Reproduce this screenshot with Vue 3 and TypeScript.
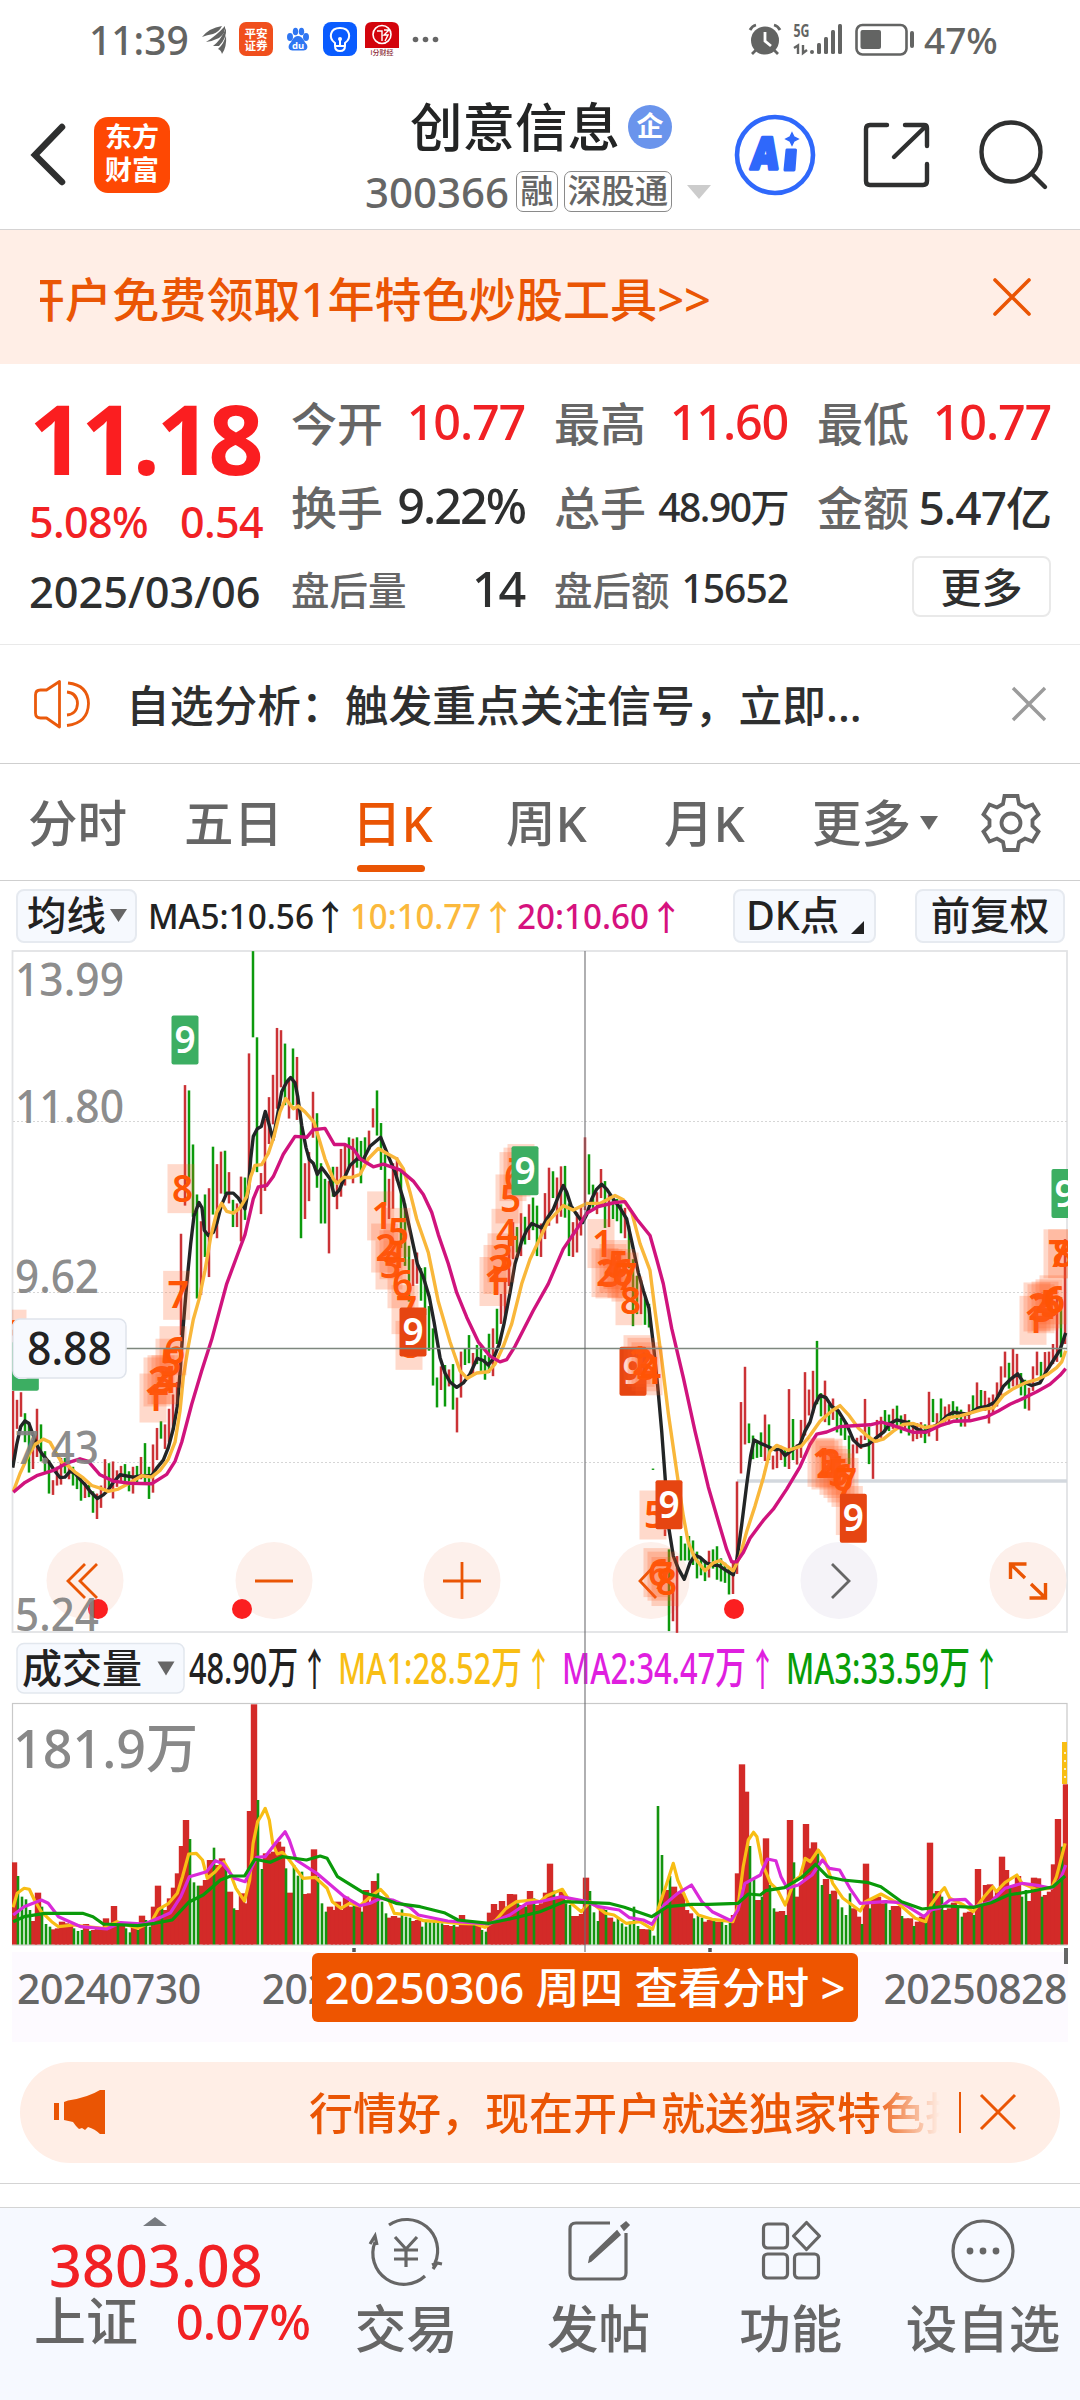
<script setup lang="ts">
interface Candle { x: number; y1: number; y2: number; up: boolean }
interface Bar { x: number; y: number; h: number; w: number; up: boolean }
interface Badge { x: number; y: number; n: number; kind: string }

const STEP = 4
const X0 = 13

// One entry per trading day: direction, high offset, low offset (chart units of 1/2.24 px).
const days = `
r1010-1180 r1030-1095 r1013-1068 g1060-1125 g1085-1193 r1120-1185 r1050-1158 g1085-1168 g1145-1195 g1165-1240 r1210-1243 r1180-1222
r1160-1220 g1160-1195 r1175-1208 g1180-1222 g1195-1230 g1205-1256 r1215-1250 g1220-1248 g1235-1283 r1240-1297 r1222-1272 r1163-1230
g1172-1235 r1168-1251 r1188-1225 r1178-1215 g1174-1222 g1190-1235 r1180-1240 g1178-1215 r1158-1208 g1127-1215 g1180-1252 r1130-1238
r1093-1165 g1078-1117 r1085-1140 r1050-1125 r1018-1098 r990-1050 r658-885 r325-595 g337-540 g458-620 g570-803 r630-795
g570-710 r556-755 g463-615 r502-668 r474-568 g472-570 r520-590 g582-643 r590-643 r530-675 g532-627 r254-560
g25-218 g218-520 r522-614 r400-562 r352-457 r302-413 r197-378 r202-330 g232-370 r310-400 g243-370 r262-403
g400-668 r500-625 r475-585 r340-443 g388-555 g500-635 g535-635 r540-702 g508-575 r508-603 r468-575 r460-550
g442-510 r445-545 g442-510 g450-545 g442-495 r427-470 r377-420 g337-438 g410-515 g480-595 r535-625 r500-602
r487-540 g515-690 g590-730 g685-810 r715-775 r700-770 g735-808 g733-840 g820-920 g870-998 g980-1047 r955-1008
g952-1045 r962-1000 g950-1052 r1025-1103 r922-1025 g915-952 g885-948 r925-975 g907-950 g910-965 g930-985 g882-970
r870-977 g826-905 r793-860 r758-850 r660-775 r632-715 g643-700 r612-708 g620-682 r592-672 g577-650 g595-708
r635-710 r567-670 r510-640 g518-578 r532-635 r507-620 g506-622 g590-708 r632-710 r610-700 r597-662 r442-605
g480-570 g548-600 r565-614 r513-578 g540-645 r570-643 g580-625 g580-630 g592-657 r600-668 g640-735 g715-865
g752-838 r762-838 g800-862 g815-868 g1184-1187 g0-0 g0-0 r1320-1335 g1365-1548 r1440-1526 r1380-1552 g1335-1390
g1352-1390 g1335-1390 g1345-1400 g1370-1430 g1385-1423 g1390-1436 r1368-1428 g1365-1408 g1358-1433
g1385-1437 g1395-1440 g1405-1466 r1395-1465 r1213-1420 r1035-1195 r956-1130 g1083-1127 g1110-1163 g1125-1160 g1103-1158 r1063-1167
g1085-1165 r1155-1186 r1140-1183 r1133-1165 g1140-1180 r1006-1185 g1073-1165 r1130-1175 r1075-1160 r968-1110 r1007-1065 r965-1060
g898-1040 g1015-1067 r987-1080 g1040-1087 r1027-1075 g1045-1103 g1070-1110 g1080-1120 g1110-1175 r1130-1190 r1115-1150 r1110-1140
r1028-1120 g1090-1174 r1120-1207 r1075-1125 r1068-1115 g1053-1103 g1063-1100 r1050-1095 g1043-1093 g1065-1105 r1062-1100 g1075-1110
r1080-1123 r1082-1118 r1080-1115 g1085-1127 r1012-1112 g1028-1080 r1060-1122 g1027-1080 r1045-1080 r1040-1085 g1033-1067 g1045-1080
g1052-1090 r1062-1090 r1040-1075 g1020-1060 r991-1050 g1008-1055 r1010-1055 r1025-1083 r1018-1060 r991-1045 r955-1020 r922-980
g947-1005 r915-1000 r927-1000 g970-1020 g985-1050 r1003-1054 r955-1010 r922-975 g945-990 r923-970 r922-960 r905-950
r800-945 g800-935 r670-905`.trim().split(/\s+/)

const py = (v: number) => 940 + v / 2.24
const candles: Candle[] = days.map((d, i) => {
  const [a, b] = d.slice(1).split('-').map(Number)
  return { x: X0 + i * STEP, y1: py(a), y2: py(b), up: d[0] === 'r' }
}).filter(c => c.y2 > 941)

// Daily turnover tops, measured down from the top of the volume pane.
const volumes = `
r727 g768 g830 g838 g870 r903 r818 g860 g912 g920 r928 r925 r905 r910 r915 g925 g933 g930 r912 g933 r930 r925 r928 r895 r915 r858
g915 r910 g925 g937 r920 g930 r887 g900 g920 r860 r797 g858 r870 r835 r803 r760 r678 r600 g657 g787 g797 r797 r780 r720 g683 r735
r715 g745 r815 g865 r870 r820 r850 r573 r253 g540 g747 r700 r700 r695 r665 r680 g745 r818 g735 g767 g755 r822 r820 r688 g770 g850
g875 r860 r870 r845 r870 r830 r860 g845 r855 g875 r810 r850 r783 g760 g845 g880 r893 r888 r893 g868 g890 g893 r903 r900 g920 g905
g907 g905 g908 g910 r915 r918 g915 r920 r885 r905 r912 g915 r912 g930 g935 r878 r852 r870 r843 r860 r822 r823 g850 r855 g860 r813
g835 r855 r850 r818 r731 g812 r830 r815 g850 g855 r888 r888 r882 r773 g813 g877 g903 r868 g870 r893 g905 g893 g910 g920 g905 g860
g918 r927 r928 g928 g947 g558 g705 r810 g768 r800 r818 r820 r870 r880 g895 g887 g893 r905 r900 g895 r905 g905 g915 g908 r885 r760
r433 r515 g678 g778 r840 g830 r655 g795 g865 r875 r873 g885 r600 g727 r830 r790 r612 r685 r667 g700 g795 r777 g822 r812 g838 g862
g885 g820 r865 r890 g912 r731 g865 r835 r830 r850 g840 g870 r858 r858 g888 r895 r895 g918 r905 r890 g908 r668 g820 r813 g830 r870
r865 r848 g860 g890 r878 r875 g885 r747 g850 r795 r793 r830 r815 r710 r750 g800 r800 r768 g830 g810 r843 r773 r775 g830 r825 r815
r733 r597 g680 r493`.trim().split(/\s+/)

const bars: Bar[] = volumes.map((v, i) => {
  const up = v[0] === 'r'
  const y = 1620 + Number(v.slice(1)) / 3
  const w = up ? 6.4 : 2.6
  return { x: X0 + 1 + i * STEP - w / 2, y, h: 1944.5 - y, w, up }
})
const upBars = bars.filter(b => b.up)
const downBars = bars.filter(b => !b.up)

const line = (sections: string[], ox: number, sx: number, oy: number, sy: number) =>
  sections.map((s, k) => s.split(' ').map(p => {
    const [x, y] = p.split(',').map(Number)
    return `${(k * ox + x / sx).toFixed(1)},${(oy + y / sy).toFixed(1)}`
  }).join(' ')).join(' ')

const ma = (...s: string[]) => line(s, 360, 3, 940, 2.24)
const vma = (...s: string[]) => line(s, 540, 2.904, 1620, 3)

const ma5 = ma(
  '38,1182 50,1130 62,1090 75,1077 87,1083 100,1110 112,1133 125,1150 147,1170 165,1190 180,1204 195,1203 210,1190 225,1195 240,1208 255,1220 270,1235 292,1251 310,1243 325,1232 340,1215 360,1198 400,1203 425,1200 455,1200 470,1183 490,1165 505,1137 520,1095 532,1045 540,970 548,880 560,770 572,680 582,618 597,588 606,600 613,650 625,662 640,655 650,635 664,595 680,567 700,567 715,578 735,602 745,560 752,490 760,440 772,423 784,418 796,384 808,415 819,447 832,395 845,340 860,318 872,308 885,320 893,350 905,415 918,465 928,492 940,500 952,525 965,510 975,520 990,535 1003,572 1018,560 1035,530 1050,505 1072,490',
  '10,492 30,462 62,442 80,475 105,520 130,580 150,650 172,725 190,755 208,800 222,855 240,935 255,970 270,990 290,1002 310,992 330,972 352,937 370,942 385,952 400,938 418,905 432,860 450,790 465,725 485,675 500,650 515,635 530,640 545,645 560,625 580,603 595,575 610,550 620,565 633,595 650,615 668,633 680,615 695,580 710,558 725,547 740,558 760,580 780,600 800,625 815,675 835,745 850,785 867,825 880,905 893,1000 905,1100 915,1200 925,1310 940,1380 955,1408 973,1432 990,1395 1005,1378 1020,1383 1040,1396 1060,1400 1080,1402',
  '0,1403 20,1413 40,1422 50,1390 65,1310 80,1220 92,1155 102,1120 120,1127 145,1135 165,1142 180,1140 195,1155 215,1143 240,1130 255,1100 270,1080 285,1040 300,1020 318,1025 335,1045 355,1055 380,1085 400,1120 420,1134 445,1130 465,1117 490,1103 510,1083 530,1075 565,1081 590,1095 615,1103 640,1090 655,1085 680,1067 700,1058 720,1060 745,1062 775,1048 800,1045 825,1035 850,1000 870,985 893,972 910,990 935,998 960,992 980,965 1000,942 1020,918 1037,880')
const ma10 = ma(
  '40,1235 60,1195 85,1155 105,1130 130,1118 150,1125 165,1145 185,1170 205,1178 225,1192 250,1205 275,1222 300,1228 325,1235 355,1230 385,1218 425,1200 455,1203 480,1188 505,1163 525,1125 540,1055 550,980 565,910 580,850 597,805 615,740 632,665 650,610 665,590 680,608 700,612 720,600 740,575 752,530 765,505 785,503 805,478 822,440 840,385 857,355 880,378 895,372 915,385 942,408 955,440 975,490 1000,535 1012,545 1030,532 1055,532',
  '0,525 25,490 55,467 85,480 110,490 130,512 150,565 170,625 205,700 235,810 270,900 300,965 322,982 350,970 385,967 405,950 430,910 455,860 485,770 510,715 545,660 565,630 610,595 640,605 680,590 720,590 765,572 790,582 815,610 840,680 870,740 885,830 905,940 925,1060 950,1190 970,1290 985,1350 1005,1385 1035,1413 1060,1395',
  '0,1390 20,1402 40,1413 60,1380 80,1325 105,1268 130,1205 150,1145 170,1132 205,1143 245,1133 270,1110 300,1078 335,1055 360,1043 385,1063 415,1093 440,1110 465,1123 490,1118 520,1100 550,1085 580,1083 615,1092 650,1088 685,1070 720,1066 750,1060 785,1052 820,1048 850,1020 880,1005 915,992 950,985 985,972 1010,958 1025,945 1037,920')
const ma20 = ma(
  '40,1237 75,1215 110,1200 160,1188 200,1172 240,1162 265,1168 300,1198 340,1212 390,1217 455,1218 500,1197 525,1168 545,1125 575,1040 605,965 635,895 680,770 715,700 735,660 760,580 775,553 800,550 820,530 850,480 885,440 920,442 940,425 975,422 1003,458 1035,458 1060,468',
  '0,490 40,508 70,502 120,515 160,540 190,570 215,610 235,660 265,725 290,790 320,845 355,900 390,932 420,945 440,940 465,910 520,830 565,770 610,692 650,648 680,612 715,597 765,588 795,586 830,625 870,662 890,715 910,770 935,870 970,980 1005,1100 1045,1225',
  '0,1315 20,1365 35,1393 50,1393 70,1372 90,1340 130,1300 160,1275 200,1230 240,1180 270,1130 290,1107 320,1102 360,1090 400,1088 450,1086 485,1080 530,1090 580,1103 620,1102 660,1088 700,1078 750,1077 800,1068 835,1055 870,1040 915,1025 950,1012 990,995 1020,975 1037,960')

const vol1 = vma(
  '38,862 50,820 70,805 85,808 100,840 120,875 150,905 170,920 215,915 250,920 300,925 340,905 400,925 440,905 460,868 490,850 515,820 530,770 548,702 570,700 588,720 602,775 625,755 650,725 665,750 685,805 710,843 725,780 735,670 748,605 760,585 770,565 782,600 792,670 805,702 820,697 840,720 880,775 915,772 950,805 965,845 990,865 1015,850 1045,858 1075,830 1105,808 1125,830 1145,880 1190,885 1230,902 1280,905 1330,910 1380,912 1408,922 1440,900 1470,865 1500,845 1550,840',
  '0,845 20,827 65,808 90,850 120,875 145,845 190,880 215,885 250,910 290,905 327,928 345,860 365,800 387,730 400,780 430,850 460,885 500,898 560,905 575,860 590,740 605,660 620,637 630,650 645,730 670,790 690,810 712,855 740,780 755,770 770,715 785,725 808,690 825,715 850,790 880,835 930,873 945,845 990,822 1040,850 1090,895 1120,905 1135,855 1160,820 1175,803 1190,835 1230,855 1258,875 1290,830 1315,800 1325,815 1350,788 1385,765 1400,790 1440,808 1485,805 1500,770 1525,670')
const vol2 = vma(
  '38,885 70,860 120,840 140,850 170,890 235,920 310,927 350,908 420,912 470,890 495,878 525,830 550,770 600,755 625,722 645,730 680,775 712,785 745,712 770,710 800,670 828,635 840,660 860,720 920,760 960,795 1000,830 1045,857 1075,850 1105,835 1140,840 1190,862 1215,885 1300,903 1420,912 1480,885 1530,850',
  '0,845 60,830 130,843 170,860 230,870 260,893 300,900 325,913 360,855 400,820 440,795 470,845 500,875 555,902 575,870 595,790 640,765 660,717 685,722 700,770 718,805 750,795 790,765 820,720 840,745 870,750 900,805 930,850 1000,845 1050,848 1115,890 1135,870 1160,865 1190,840 1235,838 1258,862 1310,845 1350,805 1400,790 1450,797 1485,805 1510,780 1527,735')
const vol3 = vma(
  '38,905 70,890 130,880 240,880 270,890 300,912 400,917 450,910 500,900 550,845 590,825 640,780 670,768 710,768 740,718 785,727 820,710 890,720 930,708 950,715 980,770 1055,818 1100,830 1150,850 1220,860 1290,878 1330,900 1420,910 1490,895',
  '0,875 70,845 200,850 245,862 325,890 370,860 440,853 490,853 575,850 605,822 640,825 655,812 710,803 760,772 800,733 835,770 880,780 950,787 990,800 1050,845 1110,867 1180,858 1260,862 1310,848 1360,825 1420,815 1490,800 1525,768')

const marks: [number, number, number, string?][] = [
  [39, 883, 8], [76, 955, 9, 'top'],
  [459, 1026, 1], [471, 990, 2], [483, 985, 3], [495, 985, 4], [507, 948, 5], [519, 920, 6], [530, 796, 7], [543, 557, 8], [555, 224, 9, 'top'],
  [1142, 618, 1], [1154, 690, 2], [1167, 728, 3], [1179, 705, 4], [1191, 655, 5], [1203, 770, 6], [1215, 828, 7], [1227, 908, 8], [1239, 878, 9, 'low'],
  [1479, 765, 1], [1491, 738, 2], [1503, 712, 3], [1515, 657, 4], [1527, 580, 5], [1539, 530, 6], [1551, 520, 7], [1563, 512, 8], [1575, 517, 9, 'top'],
  [1803, 680, 1], [1815, 745, 2], [1827, 748, 3], [1839, 736, 4], [1851, 727, 5], [1863, 747, 6], [1875, 755, 7], [1887, 808, 8], [1899, 966, 9, 'low'],
  [1911, 940, 1], [1923, 946, 2], [1935, 956, 3], [1947, 965, 4], [1959, 1288, 5], [1971, 1417, 6], [1983, 1425, 7], [1995, 1437, 8], [2007, 1265, 9, 'low'],
  [2463, 1170, 1], [2475, 1176, 2], [2487, 1172, 3], [2499, 1188, 4], [2511, 1195, 5], [2523, 1205, 6], [2535, 1215, 7], [2548, 1278, 8], [2560, 1295, 9, 'low'],
  [3099, 852, 1], [3111, 822, 2], [3123, 826, 3], [3135, 820, 4], [3147, 815, 5], [3159, 806, 6], [3171, 703, 7], [3185, 703, 8], [3195, 568, 9, 'top'],
]
const badges: Badge[] = marks.map(([x, y, n, kind]) => ({ x: x / 3, y: py(y), n, kind: kind ?? 'count' }))

const priceLabels = [
  { t: '13.99', y: 996, w: 109 }, { t: '11.80', y: 1123, w: 109 }, { t: '9.62', y: 1293, w: 84 },
  { t: '7.43', y: 1464, w: 84 }, { t: '5.24', y: 1631, w: 84 },
]
const tabs = [
  { t: '分时', w: 156 }, { t: '五日', w: 168 }, { t: '日K', w: 154, on: true }, { t: '周K', w: 158 }, { t: '月K', w: 148 },
]
const quotes = [
  { k: '今开', v: '10.77', c: 'up' }, { k: '最高', v: '11.60', c: 'up' }, { k: '最低', v: '10.77', c: 'up' },
  { k: '换手', v: '9.22%', c: 'rate' }, { k: '总手', v: '48.90万', c: 'sm' }, { k: '金额', v: '5.47亿', c: 'md' },
  { k: '盘后量', v: '14', c: 'low' }, { k: '盘后额', v: '15652', c: 'low sm' },
]
</script>

<template>
  <div class="phone">
    <header class="status">
      <span class="clock">11:39</span>
      <svg class="sicons" width="260" height="44" viewBox="195 18 260 44">
        <g fill="#636463"><path d="M202 37q7-9 20-11-3 6-9 8-6 1-11 3z" /><path d="M206 42q10-6 19-16 1 7-6 12-6 3-13 4z" /><path d="M213 46q8-6 13-18 1 10-7 18z" /><path d="M218 49q6-5 8-14 1 12-4 19-1-4-4-5z" /></g>
        <rect x="239" y="22" width="34" height="34" rx="7" fill="#f04f1d" />
        <text x="256" y="38" class="mini" font-size="11.5">平安</text><text x="256" y="49.500" class="mini" font-size="11.5">证券</text>
        <g fill="#2f76f2"><ellipse cx="290" cy="37" rx="3" ry="4" /><ellipse cx="295.500" cy="31.500" rx="2.700" ry="3.800" /><ellipse cx="301.500" cy="31.500" rx="2.700" ry="3.800" /><ellipse cx="306" cy="37" rx="3" ry="4" /><path d="M298 36c5 0 6 6 8.500 8 2 3 .5 6.500-3 6.500h-11c-3.500 0-5-3.500-3-6.500 2.500-2 3.500-8 8.500-8z" /></g>
        <text x="298" y="48.500" class="mini" font-size="9.500">du</text>
        <rect x="323" y="22" width="34" height="34" rx="8" fill="#0a5cff" />
        <g fill="none" stroke="#fff" stroke-width="2"><path d="M335 46v-3c-7-5-5-15 5-15s12 10 5 15v3q0 5-5 5t-5-5zM335 46h10M340 40v5" /></g><circle cx="340" cy="39" r="2" fill="#fff" />
        <path d="M365 48V29q0-7 7-7h20q7 0 7 7v19z" fill="#d3040c" /><circle cx="382" cy="34.500" r="9" fill="none" stroke="#fff" stroke-width="1.600" /><path d="M377 31h5v10M384 30h5l-5 5h4l-3 6" fill="none" stroke="#fff" stroke-width="1.400" />
        <text x="382" y="55" font-size="7" text-anchor="middle" fill="#8c2a35">i分财经</text>
        <g fill="#666"><circle cx="415.500" cy="39.500" r="2.800" /><circle cx="425.500" cy="39.500" r="2.800" /><circle cx="435.500" cy="39.500" r="2.800" /></g>
      </svg>
      <svg class="sright" width="170" height="44" viewBox="748 18 170 44">
        <circle cx="765" cy="40.500" r="14" fill="#636463" /><path d="M765 32v9l6 5" fill="none" stroke="#fff" stroke-width="2.800" />
        <path d="M750 30q2-4 6-5M780 30q-2-4-6-5M756 50l-4 4M774 50l4 4" stroke="#636463" stroke-width="2.800" fill="none" />
        <text x="793.500" y="37" font-size="17.500" textLength="16" lengthAdjust="spacingAndGlyphs" font-weight="700" fill="#636463">5G</text>
        <path d="M794 48l4-2.500V54M803 45v8l4-3" fill="none" stroke="#636463" stroke-width="2.400" />
        <g fill="#636463"><circle cx="812" cy="52" r="2" /><rect x="817" y="43" width="4" height="11" rx="1.500" /><rect x="824" y="37" width="4" height="17" rx="1.500" /><rect x="831" y="30" width="4" height="24" rx="1.500" /><rect x="838" y="24" width="4" height="30" rx="1.500" /></g>
        <rect x="856.500" y="25" width="50" height="29.500" rx="6" fill="none" stroke="#636463" stroke-width="2.600" /><rect x="860.500" y="30" width="20.500" height="19" rx="2" fill="#636463" /><rect x="910" y="31" width="4" height="17" rx="2" fill="#636463" />
      </svg>
      <span class="pct">47%</span>
    </header>

    <nav class="nav">
      <svg class="back" width="44" height="70" viewBox="0 0 44 70"><path d="M36 7L9 35l27 27" fill="none" stroke="#2e2f2f" stroke-width="6.500" stroke-linecap="round" /></svg>
      <div class="logo"><span>东方</span><span>财富</span></div>
      <div class="title">
        <div class="name"><b>创意信息</b><i>企</i></div>
        <div class="code"><span>300366</span><em>融</em><em>深股通</em><svg width="26" height="16" viewBox="0 0 26 16"><path d="M1 1h24L13 15z" fill="#ccc" /></svg></div>
      </div>
      <svg class="tools" width="290" height="90" viewBox="730 109 290 90">
        <g transform="translate(-30 0)">
          <circle cx="805" cy="154" r="38" fill="none" stroke="#2f68fb" stroke-width="4.600" />
          <text x="781" y="168" font-size="44" font-weight="900" fill="#2f68fb" stroke="#2f68fb" stroke-width="3.500" stroke-linejoin="round" textLength="27" lengthAdjust="spacingAndGlyphs" transform="skewX(-6) translate(17 0)">A</text>
          <path d="M817 149h8.500l-1.500 20h-9z" fill="#2f68fb" stroke="#2f68fb" stroke-width="3" stroke-linejoin="round" /><path d="M822 132l2 4 4 2-4 2-2 4-2-4-4-2 4-2z" fill="#2f68fb" stroke="#2f68fb" stroke-width="1.500" />
        </g>
        <g fill="none" stroke="#2f3030" stroke-width="4.400" stroke-linecap="round"><path d="M887 124h-17q-4 0-4 4v52q0 4 4 4h53q4 0 4-4v-17M905 124h19q3 0 3 3v18M926 125l-32 31" /></g>
      </svg>
      <svg class="search" width="60" height="76" viewBox="975 116 74 76"><g fill="none" stroke="#2f3030" stroke-width="4.400" stroke-linecap="round"><circle cx="1011" cy="151" r="29.500" /><path d="M1032 173l13 13" /></g></svg>
    </nav>

    <section class="banner">
      <div class="clip"><span>开户免费领取1年特色炒股工具&gt;&gt;</span></div>
      <svg width="40" height="40" viewBox="0 0 40 40"><path d="M3 3l34 34M37 3L3 37" stroke="#ea5504" stroke-width="3.600" stroke-linecap="round" /></svg>
    </section>

    <section class="quote">
      <div class="main">
        <div class="price">11.18</div>
        <div class="chg"><span>5.08%</span><span>0.54</span></div>
        <div class="date">2025/03/06</div>
      </div>
      <div class="grid">
        <div v-for="q in quotes" :key="q.k" class="cell" :class="q.c"><span class="k">{{ q.k }}</span><span class="v">{{ q.v }}</span></div>
        <div class="cell more"><button>更多</button></div>
      </div>
    </section>

    <section class="notice">
      <svg width="60" height="52" viewBox="32 678 60 52" fill="none" stroke="#ea5a0c" stroke-width="2.800" stroke-linejoin="round"><path d="M35.500 695q0-5 5-5h6l13-8.500v45.500l-13-9h-6q-5 0-5-5z" /><path d="M67 692q10 1 10.500 11.500Q77 714 67 715M68 683q20 2 20.500 20.500Q88 723 67 725.500" /></svg>
      <span>自选分析：触发重点关注信号，立即...</span>
      <svg class="x" width="36" height="36" viewBox="0 0 36 36"><path d="M2 2l32 32M34 2L2 34" stroke="#9b9b9b" stroke-width="3.400" /></svg>
    </section>

    <section class="tabs">
      <div v-for="t in tabs" :key="t.t" class="tab" :class="{ on: t.on }" :style="{ width: t.w + 'px' }">{{ t.t }}</div>
      <div class="tab last">更多<svg width="18" height="14" viewBox="0 0 18 14"><path d="M0 0h18L9 14z" fill="#666" /></svg></div>
      <svg class="gear" width="60" height="62" viewBox="-30 -31 60 62" fill="none" stroke="#666" stroke-width="3.800"><circle r="9.500" /><path d="M-6.500-27h13l1.500 8 6 3.500 7.500-3 6 10-6 5.500v6l6 5.500-6 10-7.500-3-6 3.500-1.500 8h-13l-1.500-8-6-3.500-7.500 3-6-10 6-5.500v-6l-6-5.500 6-10 7.500 3 6-3.500z" /></svg>
    </section>

    <section class="kbar">
      <div class="chip c1">均线<svg width="17" height="13" viewBox="0 0 17 13"><path d="M0 0h17L8.500 13z" fill="#666" /></svg></div>
      <svg class="legend" width="570" height="60" viewBox="140 886 570 60">
        <g font-size="34.500" font-weight="500">
          <g fill="#222"><text x="148" y="929" textLength="166" lengthAdjust="spacingAndGlyphs">MA5:10.56</text><text x="313" y="930" class="arr">↑</text></g>
          <g fill="#fbb93c"><text x="350" y="929" textLength="131" lengthAdjust="spacingAndGlyphs">10:10.77</text><text x="481" y="930" class="arr">↑</text></g>
          <g fill="#d6127e"><text x="517" y="929" textLength="132" lengthAdjust="spacingAndGlyphs">20:10.60</text><text x="649" y="930" class="arr">↑</text></g>
        </g>
      </svg>
      <div class="chip c2">DK点<svg width="13" height="13" viewBox="0 0 13 13"><path d="M13 0v13H0z" fill="#222" /></svg></div>
      <div class="chip c3">前复权</div>
    </section>

    <section class="chart">
      <svg class="plot" width="1080" height="1008" viewBox="0 944 1080 1008">
        <defs>
          <clipPath id="kpane"><rect x="12" y="951" width="1056" height="682" /></clipPath>
          <clipPath id="vpane"><rect x="12" y="1703" width="1056" height="242" /></clipPath>
        </defs>
        <rect x="12.500" y="951" width="1054.500" height="681" fill="none" stroke="#e2e3e5" stroke-width="1.800" />
        <g stroke="#d6d6d6" stroke-width="1" stroke-dasharray="2 2"><path d="M13 1121.500H1067M13 1292.500H1067M13 1462.500H1067" /></g>

        <g fill="#fdf0eb"><circle v-for="x in [85, 274, 462, 651, 1028]" :key="x" :cx="x" cy="1580.500" r="38.500" /></g>
        <circle cx="839" cy="1580.500" r="38.500" fill="#f5f3f8" />
        <path d="M737 1481H1067" stroke="#d3d8de" stroke-width="3.500" />
        <g fill="none" stroke="#ea5504" stroke-width="2.800"><path d="M85 1564l-17 17 17 17M97 1564l-17 17 17 17M255 1581h38M443 1581h38M462 1562v37M656 1564l-16 17 16 17" /><path d="M1010.500 1579v-15h16M1011 1564.500l14 13.500M1045.500 1583v15h-16M1045 1597.500l-14-13.500" stroke-width="3.400" /></g>
        <path d="M832 1564l17 17-17 17" fill="none" stroke="#666" stroke-width="2.800" />
        <g fill="#fb1f20"><circle cx="98" cy="1609" r="10" /><circle cx="242" cy="1609" r="10" /><circle cx="734" cy="1609" r="10" /></g>

        <g clip-path="url(#kpane)">
          <line v-for="(c, i) in candles" :key="i" :x1="c.x" :x2="c.x" :y1="c.y1" :y2="c.y2" :stroke="c.up ? '#cb3236' : '#0c9a0c'" stroke-width="2.500" />
          <g fill="none" stroke-width="3.400" stroke-linejoin="round"><polyline :points="ma5" stroke="#222526" /><polyline :points="ma10" stroke="#f9b73a" /><polyline :points="ma20" stroke="#d0137d" /></g>
        </g>
        <g fill="#828282" fill-opacity=".92" font-size="45"><text v-for="p in priceLabels" :key="p.t" x="15" :y="p.y" :textLength="p.w" lengthAdjust="spacingAndGlyphs">{{ p.t }}</text></g>
        <g clip-path="url(#kpane)">
          <g v-for="(b, i) in badges" :key="i">
            <rect :x="b.x - 13.500" :y="b.y - 24.500" width="27" height="49" :rx="b.kind === 'count' ? 0 : 2" :class="b.kind" />
            <text :x="b.x + (b.kind === 'count' ? 1.500 : 0)" :y="b.y + 13" text-anchor="middle" font-size="37" :fill="b.kind === 'count' ? '#ff5404' : '#fff'" font-weight="600">{{ b.n }}</text>
          </g>
          <path d="M126 1348.500H1067" stroke="#7d877e" stroke-width="1.400" />
        </g>
        <rect x="13" y="1319" width="113" height="59" rx="7" fill="#f7f9fe" stroke="#dfe4ec" stroke-width="1.500" />
        <text x="27" y="1365" font-size="45" fill="#222" textLength="85" lengthAdjust="spacingAndGlyphs">8.88</text>

        <rect x="17" y="1643.500" width="167" height="49.500" rx="7" fill="#f6f9fe" stroke="#e2e7ee" stroke-width="1.500" />
        <text x="22" y="1683" font-size="40" fill="#222" textLength="120" font-weight="500">成交量</text><path d="M157.500 1661.500h17l-8.500 14z" fill="#666" />
        <g font-size="44" font-weight="500" class="vlegend">
          <g fill="#222"><text x="189" y="1684" textLength="109" lengthAdjust="spacingAndGlyphs">48.90万</text><text x="301" y="1686" textLength="27" lengthAdjust="spacingAndGlyphs">↑</text></g>
          <g fill="#f8be14"><text x="338" y="1684" textLength="184" lengthAdjust="spacingAndGlyphs">MA1:28.52万</text><text x="525" y="1686" textLength="27" lengthAdjust="spacingAndGlyphs">↑</text></g>
          <g fill="#df1fdf"><text x="562" y="1684" textLength="184" lengthAdjust="spacingAndGlyphs">MA2:34.47万</text><text x="749" y="1686" textLength="27" lengthAdjust="spacingAndGlyphs">↑</text></g>
          <g fill="#089d08"><text x="786" y="1684" textLength="184" lengthAdjust="spacingAndGlyphs">MA3:33.59万</text><text x="973" y="1686" textLength="27" lengthAdjust="spacingAndGlyphs">↑</text></g>
        </g>
        <rect x="12.500" y="1703.500" width="1054.500" height="241.500" fill="none" stroke="#c9c9c9" stroke-width="1.200" />
        <text x="13" y="1768" font-size="53" fill="#888" textLength="185" lengthAdjust="spacingAndGlyphs">181.9万</text>
        <g clip-path="url(#vpane)">
          <rect v-for="(b, i) in upBars" :key="'u' + i" :x="b.x" :y="b.y" :width="b.w" :height="b.h" fill="#d32a28" />
          <rect v-for="(b, i) in downBars" :key="'d' + i" :x="b.x" :y="b.y" :width="b.w" :height="b.h" fill="#14940f" />
          <rect x="1062" y="1742" width="5" height="42" fill="#f8be14" /><path d="M1065 1752v28" stroke="#fff" stroke-width="1.500" stroke-dasharray="2 6" />
          <g fill="none" stroke-width="3.200" stroke-linejoin="round"><polyline :points="vol1" stroke="#f8be14" /><polyline :points="vol2" stroke="#d92ad9" /><polyline :points="vol3" stroke="#0a9a0a" /></g>
        </g>
        <path d="M585 951V1952" stroke="#6c6c70" stroke-opacity=".6" stroke-width="1.800" />
        <path d="M354 1948v4M710 1948v4" stroke="#555" stroke-width="3.500" />
      </svg>
    </section>

    <section class="dates">
      <span>20240730</span><span class="mid">20241202</span><span class="last">20250828</span>
      <div class="tip">20250306 周四 查看分时 &gt;</div>
      <i class="tick"></i>
    </section>

    <section class="pill">
      <svg width="54" height="50" viewBox="52 2088 54 50"><path d="M54 2104h5v17h-5zM64 2103l4-1.500q20-3 32-10.500h5v44h-5q-5-5-12-7l-3 3-3-2-3 1-3-3-3-4-9-2z" fill="#ea5504" /></svg>
      <div class="scroll">行情好，现在开户就送独家特色投</div>
      <i></i>
      <svg width="38" height="38" viewBox="0 0 38 38"><path d="M2 2l34 34M36 2L2 36" stroke="#ea5504" stroke-width="3" /></svg>
    </section>

    <footer class="bottom">
      <div class="index">
        <svg width="24" height="10" viewBox="0 0 24 10"><path d="M12 0l12 9H0z" fill="#777b80" /></svg>
        <div class="pts">3803.08</div>
        <div class="row"><span>上证</span><b>0.07%</b></div>
      </div>
      <div class="item"><svg width="80" height="72" viewBox="-40 -36 80 72" fill="none" stroke="#666" stroke-width="3.200"><path d="M-17-26A31 31 0 0 1 29 12M19 25A31 31 0 0 1-31-9M-36-7l5-8 2 9M26 14l5-2 5 1M31 12l-4 6" /><path d="M-11-14L0-2l11-12M0-2v18M-12-1h24M-12 8h24" /></svg><span>交易</span></div>
      <div class="item"><svg width="80" height="72" viewBox="-40 -36 80 72" fill="none" stroke="#666" stroke-width="3.200"><path d="M12-28h-34q-6 0-6 6v44q0 6 6 6h44q6 0 6-6v-40" /><path d="M-7 10l-2 1 1-5 27-26 3 4zM23-25l5-4 3 3-5 5z" fill="#666" stroke-width="1.500" /></svg><span>发帖</span></div>
      <div class="item"><svg width="80" height="72" viewBox="-40 -36 80 72" fill="none" stroke="#666" stroke-width="3.200" stroke-linejoin="round"><rect x="-27.500" y="-27" width="24" height="24" rx="4" /><rect x="-27.500" y="3" width="24" height="24" rx="4" /><rect x="3.500" y="3" width="24" height="24" rx="4" /><path d="M15.500-28.500l13 13.500-13 13.500L2.500-15z" /></svg><span>功能</span></div>
      <div class="item"><svg width="80" height="72" viewBox="-40 -36 80 72" fill="none" stroke="#666" stroke-width="3.200"><circle r="30" /><g fill="#666" stroke="none"><circle cx="-13" r="3.400" /><circle r="3.400" /><circle cx="13" r="3.400" /></g></svg><span>设自选</span></div>
    </footer>
  </div>
</template>

<style>
body { margin: 0; background: #fff; }
</style>

<style scoped>
.phone { width: 1080px; height: 2400px; overflow: hidden; background: #fff; color: #2e2f2f; font-family: "Noto Sans", "Noto Sans CJK SC", sans-serif; font-weight: 500; display: flex; flex-direction: column; box-sizing: border-box; }
.phone * { box-sizing: border-box; }
.phone > * { flex: none; }
i, em { font-style: normal; }
svg { display: block; }
svg text { font-family: "Noto Sans", "Noto Sans CJK SC", sans-serif; }
.mini { fill: #fff; text-anchor: middle; font-weight: 700; }

.status { height: 80px; display: flex; align-items: center; padding: 0 0 0 89px; color: #636463; line-height: 80px; }
.clock { font-size: 39px; width: 106px; }
.sicons { margin-right: 293px; }
.pct { font-size: 37px; margin-left: 6px; }

.nav { height: 150px; display: flex; align-items: center; border-bottom: 1.500px solid #d5d3d3; padding-left: 26px; }
.back { width: 44px; }
.logo { margin-left: 24px; width: 76px; height: 76px; border-radius: 14px; background: #fe4803; color: #fff; font-size: 27px; font-weight: 700; line-height: 33px; display: flex; flex-direction: column; align-items: center; justify-content: center; padding-bottom: 3px; }
.title { width: 360px; margin-left: 194px; height: 142px; }
.name { display: flex; align-items: center; height: 72px; padding-left: 46px; margin-top: 7px; }
.name b { font-size: 52.500px; font-weight: 500; color: #232424; line-height: 72px; }
.name i { width: 44px; height: 44px; border-radius: 50%; background: #6a94ec; color: #fff; font-size: 27px; font-weight: 700; line-height: 42px; text-align: center; margin-left: 8px; }
.code { display: flex; align-items: center; color: #666; height: 44px; margin-top: 7px; padding-left: 1px; }
.code span { font-size: 42px; line-height: 44px; margin-right: 7px; }
.code em { border: 1.500px solid #8a8a8a; border-radius: 7px; height: 41px; font-size: 33.500px; line-height: 37px; padding: 0 3px; margin-right: 6px; }
.code svg { margin-left: 8px; }
.tools { width: 290px; margin-left: 6px; }
.search { width: 74px; height: 76px; margin-left: -45px; }

.banner { height: 134px; background: #ffeee6; display: flex; align-items: center; padding: 0 48px 0 40px; color: #ea5504; }
.clip { flex: 1; overflow: hidden; padding-top: 4px; }
.clip span { display: block; margin-left: -22px; font-size: 47.100px; line-height: 64px; white-space: nowrap; }

.quote { height: 281px; display: flex; padding-top: 17px; border-bottom: 1.500px solid #e9e9e9; }
.main { width: 291px; padding-left: 29px; }
.price { font-size: 97px; font-weight: 700; color: #fb1e20; line-height: 112px; letter-spacing: -3.600px; height: 113px; }
.chg { display: flex; justify-content: space-between; width: 234px; color: #f12124; font-size: 43px; height: 56px; line-height: 56px; letter-spacing: -.6px; }
.date { font-size: 43.300px; line-height: 84px; }
.grid { display: grid; grid-template-columns: 234px 234px 234px; column-gap: 29px; grid-template-rows: 85px 83px 81px; margin-top: -3px; }
.cell { display: flex; justify-content: space-between; align-items: center; }
.k { font-size: 46px; color: #666; }
.v { font-size: 48.500px; letter-spacing: -1.200px; }
.up .v { color: #f12124; }
.rate .v { letter-spacing: -2px; }
.sm .v { font-size: 39px; letter-spacing: -1.500px; }
.low.sm .v { letter-spacing: -1px; }
.md .v { font-size: 46px; letter-spacing: -1px; }
.low .k { font-size: 38.500px; }
.low { padding-top: 2px; }
.more { justify-content: flex-end; }
.more button { width: 139px; height: 61px; border: 2px solid #e9e9e9; border-radius: 8px; background: #fff; font: inherit; font-size: 41px; color: #2e2f2f; line-height: 54px; padding: 0; }

.notice { height: 118.500px; border-bottom: 1.500px solid #cfcfcf; display: flex; align-items: center; padding-left: 32px; }
.notice span { margin: -2px 0 0 34px; font-size: 43.750px; width: 800px; white-space: nowrap; }
.notice .x { margin-left: 85px; }

.tabs { height: 117px; border-bottom: 1.500px solid #cfcfcf; display: flex; align-items: center; color: #666; font-size: 49.500px; padding: 3px 0 0 28px; }
.tab { position: relative; height: 106px; line-height: 106px; white-space: nowrap; display: flex; align-items: center; gap: 9px; }
.tab.last { width: 169px; }
.tab.on { color: #ea5504; }
.tab.on::after { content: ""; position: absolute; left: 5px; bottom: 4px; width: 68px; height: 7px; border-radius: 4px; background: #ea5504; }

.kbar { height: 63px; display: flex; align-items: flex-start; padding: 8px 0 0 16px; }
.chip { height: 54px; border: 2px solid #e6eaf0; border-radius: 8px; background: #f6f9fe; font-size: 39.500px; line-height: 49px; color: #222; display: flex; align-items: center; white-space: nowrap; }
.c1 { width: 121px; padding-left: 9px; gap: 4px; }
.legend { margin: -3px 0 0 3px; }
.arr { font-family: "Noto Sans CJK SC"; }
.c2 { width: 143px; margin-left: 23px; padding-left: 11px; gap: 12px; }
.c2 svg { margin-top: 24px; }
.c3 { width: 150px; margin-left: 39px; justify-content: center; }

.chart { height: 1008px; }
.count { fill: #ff5a1e; fill-opacity: .23; }
.top { fill: #3cae62; }
rect.low { fill: #e64511; }

.dates { position: relative; height: 90px; margin: 0 12px; background: #fdfaff; display: flex; font-size: 41px; line-height: 73px; color: #666; padding-left: 5px; letter-spacing: -.5px; }
.dates .mid { margin-left: 61px; width: 52px; overflow: hidden; }
.dates .last { margin-left: auto; margin-right: 1px; }
.tip { position: absolute; left: 300px; top: 1px; width: 546px; height: 69px; border-radius: 6px; background: #ee5500; color: #fff; font-size: 43.700px; line-height: 68px; text-align: center; white-space: nowrap; letter-spacing: 0; }
.tick { position: absolute; right: 0; top: -4px; width: 4px; height: 16px; background: #666; }

.pill { margin: 20px 20px 0; height: 101px; border-radius: 51px; background: #ffeee6; display: flex; align-items: center; padding-left: 32px; color: #ea5504; }
.scroll { margin: -2px 0 0 203px; width: 631px; overflow: hidden; white-space: nowrap; font-size: 44px; mask-image: linear-gradient(90deg, #000 89%, transparent 100%); }
.pill i { width: 1.500px; height: 41px; background: #ea5504; margin-left: 19px; }
.pill svg:last-child { margin-left: 18px; }

.bottom { margin-top: 20px; height: 217px; border-top: 1.500px solid #d4d4d4; background: linear-gradient(#fff 0 23px, #d4d4d4 23px 24.500px, #f6f9ff 24.500px); display: flex; padding-top: 33px; color: #666; }
.index { width: 310px; padding-left: 34px; }
.index svg { margin-left: 109px; }
.pts { font-size: 57.500px; color: #f12124; line-height: 76px; padding-left: 15px; letter-spacing: .1px; }
.row { display: flex; align-items: center; justify-content: space-between; font-size: 52px; line-height: 48px; width: 276px; margin-top: -6px; }
.row b { font-weight: 500; font-size: 49px; color: #f12124; letter-spacing: -1px; }
.item { width: 192.300px; display: flex; flex-direction: column; align-items: center; font-size: 51.500px; line-height: 70px; margin-top: -2px; white-space: nowrap; }
.item span { margin-top: 6px; }
</style>
